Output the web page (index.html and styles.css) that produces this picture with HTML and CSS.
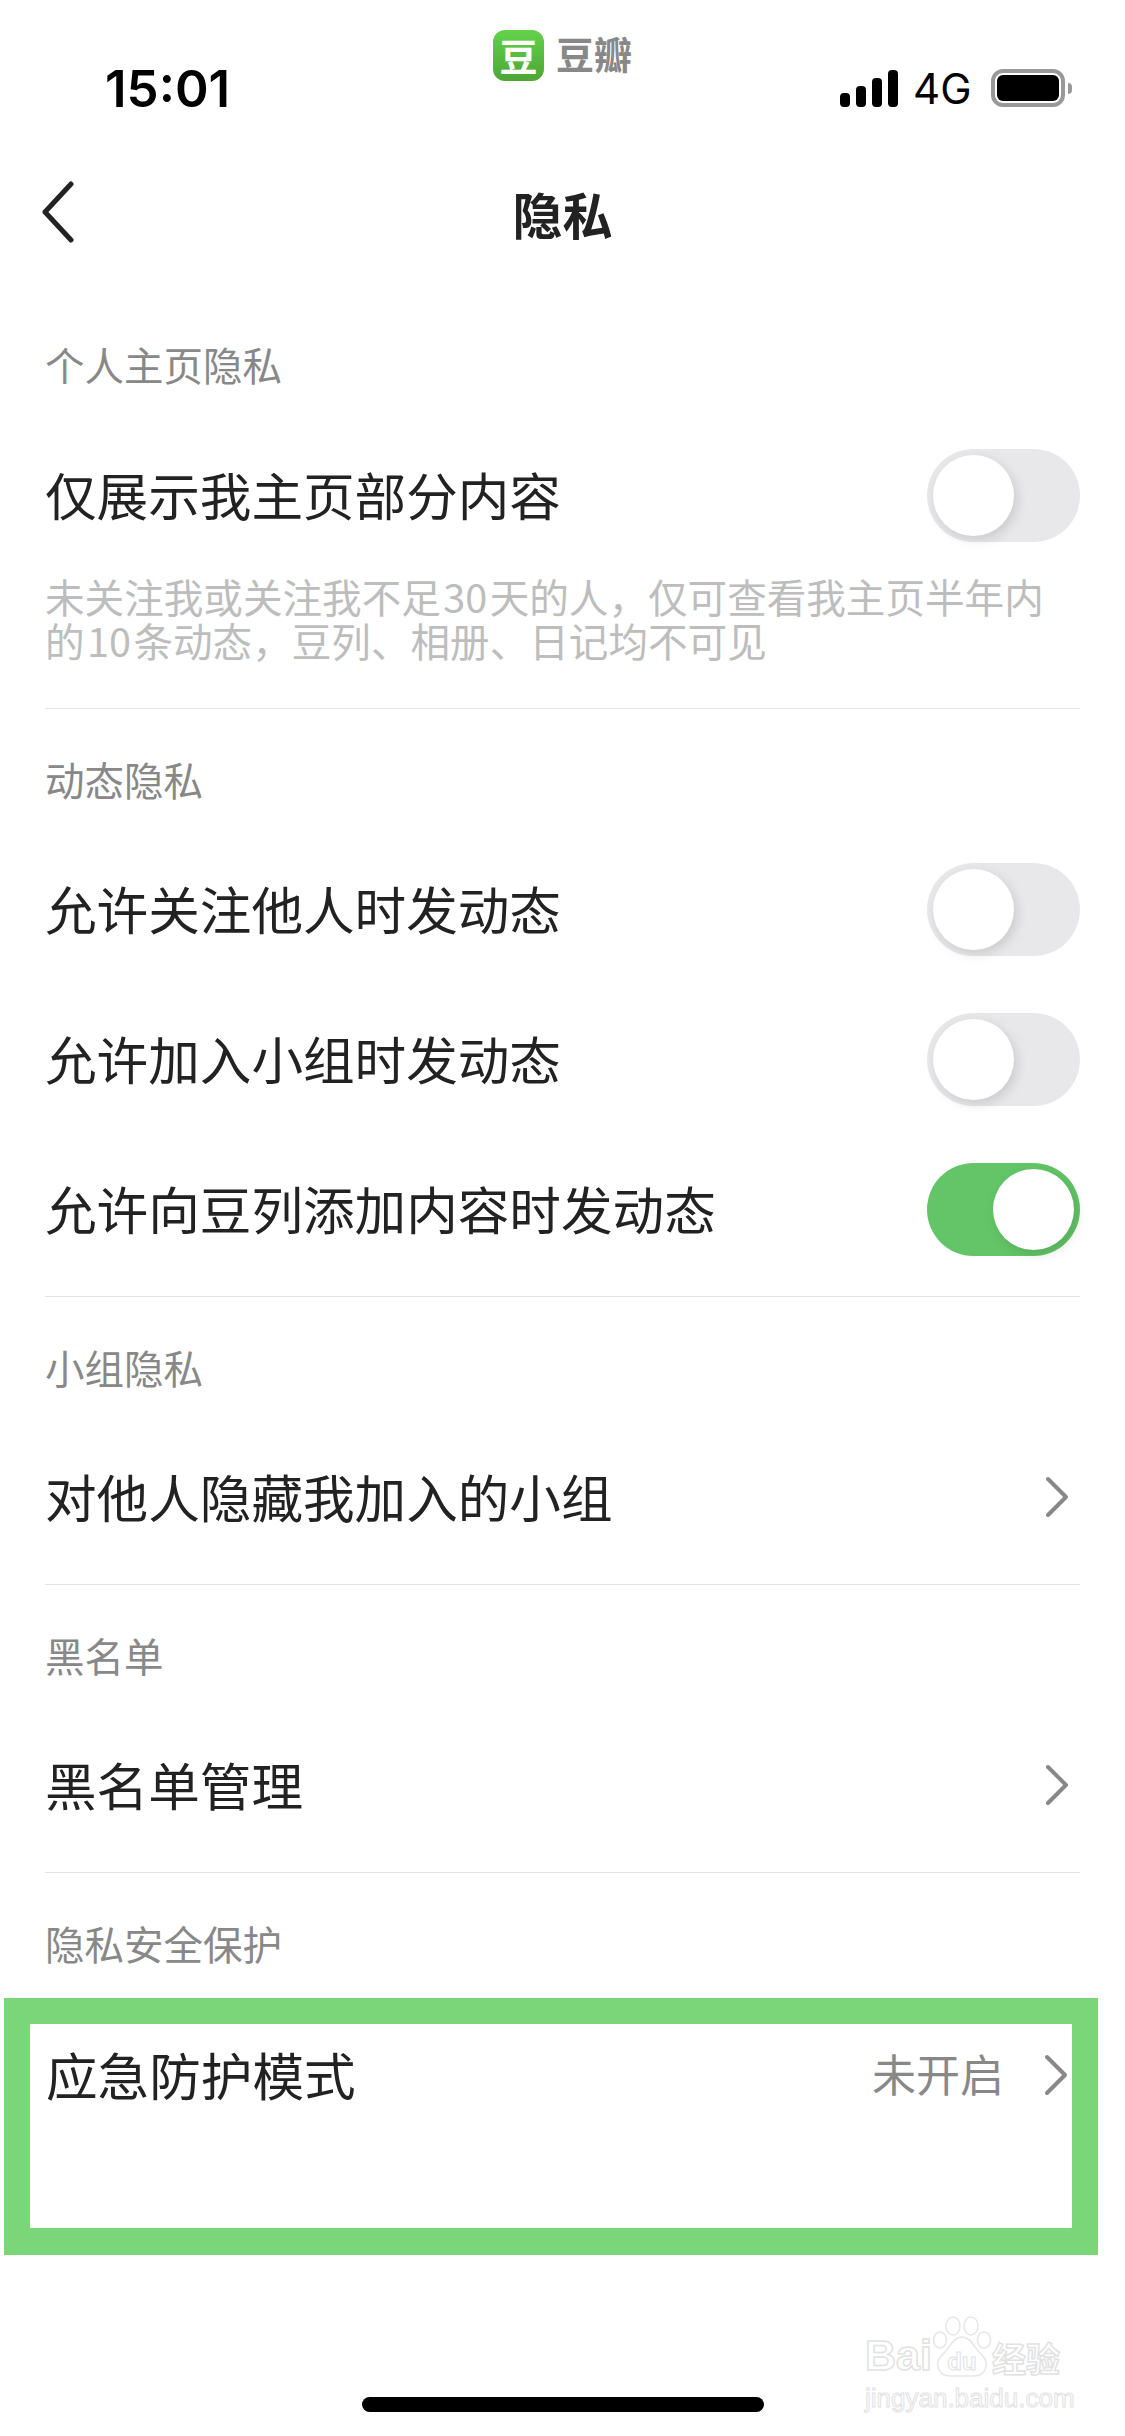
FILE: index.html
```html
<!DOCTYPE html>
<html>
<head>
<meta charset="utf-8">
<title>隐私</title>
<link rel="stylesheet" href="styles.css">
</head>
<body>
<div class="statusbar">
 <div class="time">15:01</div>
 <div class="logo"><span class="logo-icon">豆</span><span class="logo-name">豆瓣</span></div>
 <div class="status">
  <div class="signal"><i class="s1"></i><i class="s2"></i><i class="s3"></i><i class="s4"></i></div>
  <span class="net">4G</span>
  <div class="battery"><i></i></div>
  <div class="battery-tip"></div>
 </div>
</div>
<header class="nav">
 <svg class="back" width="34" height="62" viewBox="0 0 34 62"><path d="M30 3 L4 31 L30 59" fill="none" stroke="#222" stroke-width="5" stroke-linecap="round" stroke-linejoin="round"/></svg>
 <h1>隐私</h1>
</header>
<section class="group">
 <h2>个人主页隐私</h2>
 <div class="row tall">
  <span>仅展示我主页部分内容</span>
  <div class="switch"><i></i></div>
 </div>
 <p class="hint">未关注我或关注我不足&#8202;30&#8202;天的人，仅可查看我主页半年内的&#8202;10&#8202;条动态，豆列、相册、日记均不可见</p>
</section>
<section class="group">
 <h2>动态隐私</h2>
 <div class="row"><span>允许关注他人时发动态</span><div class="switch"><i></i></div></div>
 <div class="row"><span>允许加入小组时发动态</span><div class="switch"><i></i></div></div>
 <div class="row"><span>允许向豆列添加内容时发动态</span><div class="switch on"><i></i></div></div>
</section>
<section class="group">
 <h2>小组隐私</h2>
 <div class="row"><span>对他人隐藏我加入的小组</span>
  <svg class="chevron" width="24" height="42" viewBox="0 0 24 42"><path d="M3 3 L21 21 L3 39" fill="none" stroke="#888" stroke-width="4" stroke-linecap="round" stroke-linejoin="round"/></svg>
 </div>
</section>
<section class="group">
 <h2>黑名单</h2>
 <div class="row"><span>黑名单管理</span>
  <svg class="chevron" width="24" height="42" viewBox="0 0 24 42"><path d="M3 3 L21 21 L3 39" fill="none" stroke="#888" stroke-width="4" stroke-linecap="round" stroke-linejoin="round"/></svg>
 </div>
</section>
<section class="group last">
 <h2>隐私安全保护</h2>
 <div class="marked">
  <div class="row mode">
   <span>应急防护模式</span>
   <span class="value">未开启</span>
   <svg class="chevron" width="24" height="42" viewBox="0 0 24 42"><path d="M3 3 L21 21 L3 39" fill="none" stroke="#888" stroke-width="4" stroke-linecap="round" stroke-linejoin="round"/></svg>
  </div>
 </div>
</section>
<div class="homebar"></div>
<div class="watermark">
 <div class="wm-brand">
  <span class="wm-bai">Bai</span>
  <svg class="paw" width="60" height="62" viewBox="0 0 60 62" fill="#fff" stroke="#e6e6e6" stroke-width="1.5">
   <ellipse cx="21" cy="10" rx="7" ry="9"/><ellipse cx="39" cy="10" rx="7" ry="9"/>
   <ellipse cx="8" cy="24" rx="6.5" ry="8"/><ellipse cx="52" cy="24" rx="6.5" ry="8"/>
   <path d="M30 21 C21 21 18 32 10 39 C2 47 6 60 18 60 L42 60 C54 60 58 47 50 39 C42 32 39 21 30 21 Z"/>
   <text x="30" y="54" text-anchor="middle" class="wm-du">du</text>
  </svg>
  <span class="wm-cn">经验</span>
 </div>
 <div class="wm-url">jingyan.baidu.com</div>
</div>
</body>
</html>
```
FILE: styles.css
```css
* {
 box-sizing: border-box;
}
html, body {
 margin: 0;
 padding: 0;
}
body {
 position: relative;
 display: flex;
 flex-direction: column;
 width: 1125px;
 height: 2436px;
 overflow: hidden;
 background: #fff;
 color: #222;
 font-family: "Noto Sans CJK SC", "Noto Sans", sans-serif;
}

/* status bar */
.statusbar {
 display: grid;
 grid-template-columns: minmax(0, 1fr) auto minmax(0, 1fr);
 height: 160px;
}
.time {
 padding: 59px 0 0 105px;
 font-family: Inter, Roboto, sans-serif;
 font-size: 51px;
 font-weight: 600;
 line-height: 60px;
 color: #000;
}
.logo {
 display: flex;
 align-items: flex-start;
 gap: 12px;
 padding-top: 30px;
}
.logo-icon {
 width: 51px;
 height: 51px;
 border-radius: 12px;
 background: linear-gradient(#62d34a, #4ea535);
 color: #fff;
 font-size: 38px;
 font-weight: 700;
 line-height: 50px;
 text-align: center;
}
.logo-name {
 margin-top: 1px;
 font-size: 38px;
 font-weight: 700;
 line-height: 44px;
 color: #888;
}
.status {
 display: flex;
 align-items: flex-start;
 padding: 69px 0 0 208px;
}
.signal {
 display: flex;
 align-items: flex-end;
 gap: 6px;
 height: 37px;
 margin-top: 1px;
}
.signal i {
 display: block;
 width: 10px;
 border-radius: 4px;
 background: #000;
}
.s1 { height: 14px; }
.s2 { height: 21px; }
.s3 { height: 29px; }
.s4 { height: 37px; }
.net {
 margin: 1px 20px 0 15px;
 font-family: Inter, Roboto, sans-serif;
 font-size: 42px;
 line-height: 38px;
 color: #000;
}
.battery {
 width: 74px;
 height: 38px;
 padding: 2px;
 border: 4px solid #999;
 border-radius: 12px;
}
.battery i {
 display: block;
 height: 100%;
 border-radius: 6px;
 background: #000;
}
.battery-tip {
 width: 4px;
 height: 11px;
 margin: 14px 0 0 3px;
 border-radius: 0 4px 4px 0;
 background: #999;
}

/* nav */
.nav {
 position: relative;
 display: flex;
 align-items: center;
 justify-content: center;
 height: 112px;
}
.nav h1 {
 margin: 0 0 6px;
 font-size: 50px;
 font-weight: 700;
 line-height: 106px;
}
.back {
 position: absolute;
 left: 41px;
 top: 21px;
}

/* list */
.group {
 margin: 0 45px;
 padding-bottom: 12px;
 border-bottom: 1px solid #e3e3e3;
}
.group:first-of-type {
 padding-bottom: 0;
}
.group h2 {
 height: 60px;
 margin: 40px 0 25px;
 font-size: 39.5px;
 font-weight: 400;
 line-height: 60px;
 color: #888;
}
.group:first-of-type h2 {
 margin-top: 62px;
 margin-bottom: 39px;
}
.group.last {
 padding: 0;
 border: 0;
}
.row {
 display: flex;
 align-items: center;
 justify-content: space-between;
 height: 150px;
 font-size: 51.6px;
 line-height: 70px;
}
.row > span {
 margin-bottom: 3px;
}
.row.tall {
 height: 125px;
}
.chevron {
 margin-right: 11px;
}
.hint {
 margin: 0;
 padding: 16px 10px 46px 0;
 font-size: 39.6px;
 line-height: 44px;
 color: #bdbdbd;
}
.switch {
 position: relative;
 width: 153px;
 height: 93px;
 border-radius: 47px;
 background: #e8e8ea;
}
.switch i {
 position: absolute;
 left: 6px;
 top: 6px;
 width: 81px;
 height: 81px;
 border-radius: 50%;
 background: #fff;
 box-shadow: 3px 4px 12px rgba(0,0,0,0.13);
}
.switch.on {
 background: #63c567;
}
.switch.on i {
 left: 66px;
}

/* annotation box */
.marked {
 height: 257px;
 margin: 0 -18px 0 -41px;
 padding-left: 16px;
 border: 26px solid #7bd67a;
 border-bottom-width: 27px;
}
.row.mode {
 justify-content: flex-start;
 height: 102px;
 margin-right: -8px;
}
.row.mode .value {
 margin-left: auto;
 margin-right: 40px;
 margin-bottom: 4px;
 font-size: 44px;
 color: #888;
}
.row.mode .chevron {
 margin-right: 12px;
}

/* home indicator */
.homebar {
 width: 402px;
 height: 15px;
 margin: auto auto 24px;
 border-radius: 8px;
 background: #000;
}

/* watermark sits on top of the page */
.watermark {
 position: absolute;
 left: 865px;
 top: 2316px;
 width: 200px;
 font-family: "Liberation Sans", sans-serif;
 color: #fff;
}
.wm-brand {
 display: flex;
 align-items: flex-end;
 height: 62px;
}
.paw {
 flex: none;
}
.wm-bai {
 font-size: 43px;
 font-weight: 700;
 line-height: 46px;
 -webkit-text-stroke: 1.5px #e2e2e2;
}
.wm-du {
 font-size: 24px;
 font-weight: 700;
 stroke: #e2e2e2;
 stroke-width: 1;
}
.wm-cn {
 font-family: "Noto Sans CJK SC", sans-serif;
 font-size: 34px;
 font-weight: 700;
 line-height: 40px;
 -webkit-text-stroke: 1.5px #e2e2e2;
}
.wm-url {
 margin-top: 6px;
 white-space: nowrap;
 font-size: 26px;
 line-height: 28px;
 -webkit-text-stroke: 1px #e2e2e2;
}
```
